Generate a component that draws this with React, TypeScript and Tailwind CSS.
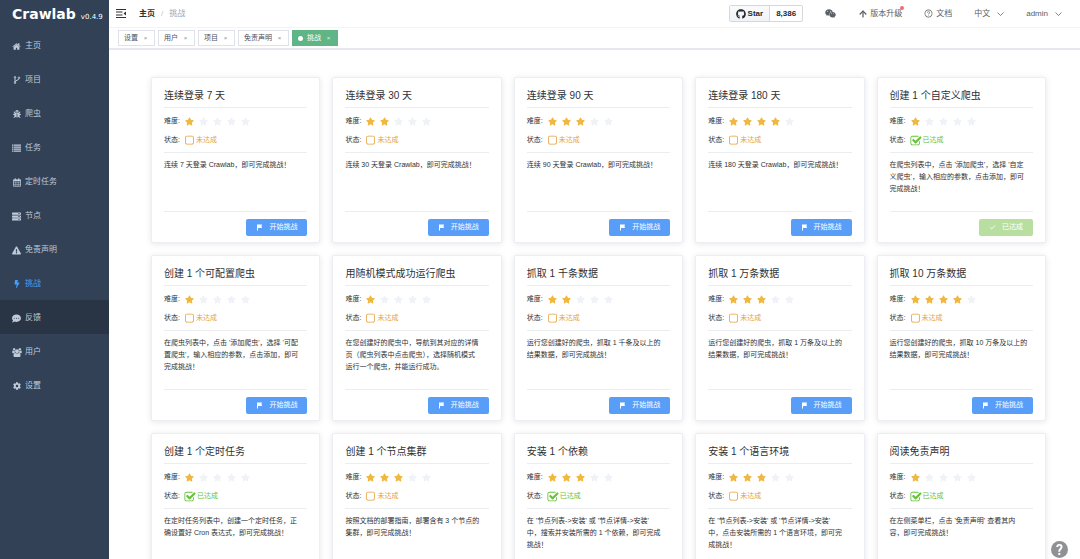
import type { ReactNode } from "react";
import { ArrowUp, Check } from "lucide-react";
import {
  FaBolt,
  FaBug,
  FaCog,
  FaCommentDots,
  FaExclamationTriangle,
  FaGithub,
  FaServer,
  FaStar,
  FaWeixin,
} from "react-icons/fa";
import { AiOutlineQuestionCircle } from "react-icons/ai";
import clsx from "clsx";

type Challenge = {
  title: string;
  difficulty: number;
  done?: boolean;
  description: string;
};

const MENU: { label: string; icon: ReactNode; active?: boolean; hover?: boolean }[] = [
  { label: "主页", icon: <HomeIcon /> },
  { label: "项目", icon: <ForkIcon /> },
  { label: "爬虫", icon: <FaBug className="size-2" /> },
  { label: "任务", icon: <ListIcon /> },
  { label: "定时任务", icon: <CalendarIcon /> },
  { label: "节点", icon: <FaServer className="size-[9px]" /> },
  { label: "免责声明", icon: <FaExclamationTriangle className="size-[9px]" /> },
  { label: "挑战", icon: <FaBolt className="size-2" />, active: true },
  { label: "反馈", icon: <FaCommentDots className="size-[9px]" />, hover: true },
  { label: "用户", icon: <GroupIcon /> },
  { label: "设置", icon: <FaCog className="size-2" /> },
];

const TABS = ["设置", "用户", "项目", "免责声明", "挑战"];

const CHALLENGES: Challenge[] = [
  { title: "连续登录 7 天", difficulty: 1, description: "连续 7 天登录 Crawlab，即可完成挑战！" },
  { title: "连续登录 30 天", difficulty: 2, description: "连续 30 天登录 Crawlab，即可完成挑战！" },
  { title: "连续登录 90 天", difficulty: 3, description: "连续 90 天登录 Crawlab，即可完成挑战！" },
  { title: "连续登录 180 天", difficulty: 4, description: "连续 180 天登录 Crawlab，即可完成挑战！" },
  {
    title: "创建 1 个自定义爬虫",
    difficulty: 1,
    done: true,
    description: "在爬虫列表中，点击 '添加爬虫'，选择 '自定\n义爬虫'，输入相应的参数，点击添加，即可\n完成挑战！",
  },
  {
    title: "创建 1 个可配置爬虫",
    difficulty: 1,
    description: "在爬虫列表中，点击 '添加爬虫'，选择 '可配\n置爬虫'，输入相应的参数，点击添加，即可\n完成挑战！",
  },
  {
    title: "用随机模式成功运行爬虫",
    difficulty: 1,
    description: "在您创建好的爬虫中，导航到其对应的详情\n页（爬虫列表中点击爬虫），选择随机模式\n运行一个爬虫，并能运行成功。",
  },
  {
    title: "抓取 1 千条数据",
    difficulty: 2,
    description: "运行您创建好的爬虫，抓取 1 千条及以上的\n结果数据，即可完成挑战！",
  },
  {
    title: "抓取 1 万条数据",
    difficulty: 3,
    description: "运行您创建好的爬虫，抓取 1 万条及以上的\n结果数据，即可完成挑战！",
  },
  {
    title: "抓取 10 万条数据",
    difficulty: 4,
    description: "运行您创建好的爬虫，抓取 10 万条及以上的\n结果数据，即可完成挑战！",
  },
  {
    title: "创建 1 个定时任务",
    difficulty: 1,
    done: true,
    description: "在定时任务列表中，创建一个定时任务，正\n确设置好 Cron 表达式，即可完成挑战！",
  },
  {
    title: "创建 1 个节点集群",
    difficulty: 3,
    description: "按照文档的部署指南，部署含有 3 个节点的\n集群，即可完成挑战！",
  },
  {
    title: "安装 1 个依赖",
    difficulty: 3,
    done: true,
    description: "在 '节点列表->安装' 或 '节点详情->安装'\n中，搜索并安装所需的 1 个依赖，即可完成\n挑战！",
  },
  {
    title: "安装 1 个语言环境",
    difficulty: 3,
    description: "在 '节点列表->安装' 或 '节点详情->安装'\n中，点击安装所需的 1 个语言环境，即可完\n成挑战！",
  },
  {
    title: "阅读免责声明",
    difficulty: 1,
    done: true,
    description: "在左侧菜单栏，点击 '免责声明' 查看其内\n容，即可完成挑战！",
  },
];

export default function App() {
  return (
    <div className="flex h-screen overflow-hidden bg-white font-['Liberation_Sans','Noto_Sans_CJK_SC',sans-serif] text-[#303133]">
      <Sidebar />
      <div className="flex min-w-0 flex-1 flex-col">
        <Navbar />
        <TagsView />
        <main className="flex-1 overflow-y-auto pt-[27px] pr-[34px] pb-6 pl-[42px] [scrollbar-width:none]">
          <div className="grid grid-cols-5 gap-3">
            {CHALLENGES.map((c) => (
              <ChallengeCard key={c.title} challenge={c} />
            ))}
          </div>
        </main>
      </div>

      {/* Floating help */}
      <button
        aria-label="帮助"
        className="fixed right-3 bottom-px flex size-[17px] items-center justify-center rounded-full bg-[#909195] font-[Roboto,sans-serif] text-[14px] leading-none font-bold text-white"
      >
        ?
      </button>
    </div>
  );
}

function Sidebar() {
  return (
    <aside className="w-[109px] shrink-0 bg-[#324155]">
      <div className="flex h-7 items-baseline gap-[5px] pl-3 font-['DejaVu_Sans',sans-serif] text-white">
        <span className="text-[14px] leading-7 font-bold">Crawlab</span>
        <span className="text-[7px]">v0.4.9</span>
      </div>
      <nav>
        {MENU.map((item) => (
          <a
            key={item.label}
            href="#"
            className={clsx(
              "flex h-[34px] items-center gap-1 pt-[2px] pl-3 text-[8px]",
              item.active ? "text-[#409eff]" : "text-[#bfcbd9]",
              item.hover && "bg-[#293445]"
            )}
          >
            <span className="flex w-[9px] justify-center">{item.icon}</span>
            {item.label}
          </a>
        ))}
      </nav>
    </aside>
  );
}

function Navbar() {
  return (
    <header className="flex h-7 shrink-0 items-center border-b border-[#f3f3f5] pr-[18px] pl-[7px] text-[8px] text-[#5a5e66]">
      <button aria-label="折叠菜单" className="mr-[13px]">
        <HamburgerIcon />
      </button>
      <div className="flex items-center gap-[6px]">
        <a href="#" className="font-bold text-[#303133]">主页</a>
        <span className="text-[#c0c4cc]">/</span>
        <span className="text-[#97a8be]">挑战</span>
      </div>

      <div className="ml-auto flex items-center gap-[22px]">
        <div className="flex h-[17px] rounded-[2px] border border-[#d5d7da] text-[8px] font-bold text-[#24292e]">
          <a href="#" className="flex items-center gap-[2px] border-r border-[#d5d7da] bg-linear-to-b from-[#fafbfc] to-[#eff3f6] px-[6px]">
            <FaGithub className="size-[10px]" />
            Star
          </a>
          <a href="#" className="flex items-center px-[6px]">8,386</a>
        </div>
        <a href="#" aria-label="微信">
          <FaWeixin className="size-[11px]" />
        </a>
        <a href="#" className="relative flex items-center gap-[2px]">
          <ArrowUp className="size-[10px]" strokeWidth={3} />
          版本升级
          <span className="absolute -top-[2px] -right-[2px] size-1 rounded-full bg-[#f56c6c]" />
        </a>
        <a href="#" className="flex items-center gap-[3px]">
          <AiOutlineQuestionCircle className="size-[9px]" />
          文档
        </a>
        <button className="flex items-center gap-[7px]">
          中文
          <ChevronIcon />
        </button>
        <button className="flex items-center gap-[7px]">
          admin
          <ChevronIcon />
        </button>
      </div>
    </header>
  );
}

function TagsView() {
  return (
    <div className="flex h-[22px] shrink-0 items-center gap-[3px] border-b-2 border-[#e6e7ec] pl-[9px] text-[7px]">
      {TABS.map((tab) => {
        const active = tab === "挑战";
        return (
          <a
            key={tab}
            href="#"
            className={clsx(
              "flex h-4 items-center border px-[5px]",
              active ? "border-[#5fb585] bg-[#5fb585] text-white" : "border-[#dfe2eb] text-[#495060]"
            )}
          >
            {active && <span className="mr-1 size-[5px] rounded-full bg-white" />}
            {tab}
            <span className={clsx("ml-1 w-[7px] text-center text-[6px]", active ? "text-white/80" : "text-[#8a8f99]")}>×</span>
          </a>
        );
      })}
    </div>
  );
}

function ChallengeCard({ challenge }: { challenge: Challenge }) {
  const { title, difficulty, done, description } = challenge;
  return (
    <section className="flex flex-col rounded-[2px] border border-[#ebeef5] bg-white px-3 pt-3 pb-[6px] shadow-[0_1px_6px_rgba(0,0,0,0.1)]">
      <h2 className="border-b border-[#ebeef0] pb-[5px] text-[10px] leading-3">{title}</h2>

      <div className="border-b border-[#ebeef0] pt-1 pb-[2px] text-[7px]">
        <div className="flex h-[19px] items-center">
          <span className="w-[21px]">难度:</span>
          <span className="flex gap-[5px]">
            {[1, 2, 3, 4, 5].map((n) => (
              <FaStar key={n} className={clsx("size-[9px]", n <= difficulty ? "text-[#f0b840]" : "text-[#eff2f7]")} />
            ))}
          </span>
        </div>
        <div className="flex h-[19px] items-center">
          <span className="w-5">状态:</span>
          <span className={clsx("flex items-center gap-px", done ? "text-[#67c23a]" : "text-[#e6a23c]")}>
            {done ? <CheckSquareIcon /> : <SquareIcon />}
            {done ? "已达成" : "未达成"}
          </span>
        </div>
      </div>

      <p className="min-h-[58px] pt-[6px] text-[7px] leading-3 whitespace-pre-line">{description}</p>

      <div className="flex justify-end border-t border-[#ebeef0] pt-[7px]">
        <button
          disabled={done}
          className={clsx(
            "flex h-[17px] items-center gap-[6px] rounded-[2px] px-[10px] text-[7px] text-white",
            done ? "bg-[#b8dfa0]" : "bg-[#589ef8]"
          )}
        >
          {done ? <Check className="size-[7px]" strokeWidth={3} /> : <FlagIcon />}
          {done ? "已达成" : "开始挑战"}
        </button>
      </div>
    </section>
  );
}

function HomeIcon() {
  return (
    <svg viewBox="0 0 1792 1792" fill="currentColor" className="size-[9px]">
      <path d="M1472 992v480q0 26-19 45t-45 19h-384v-384h-256v384h-384q-26 0-45-19t-19-45v-480q0-1 .5-3t.5-3l575-474 575 474q1 2 1 6zm223-69l-62 74q-8 9-21 11h-3q-13 0-21-7l-692-577-692 577q-12 8-24 7-13-2-21-11l-62-74q-8-10-7-23.5t11-21.5l719-599q32-26 76-26t76 26l244 204v-195q0-14 9-23t23-9h192q14 0 23 9t9 23v408l219 182q10 8 11 21.5t-7 23.500z" />
    </svg>
  );
}

function ForkIcon() {
  return (
    <svg viewBox="0 0 16 16" fill="none" stroke="currentColor" strokeWidth="2" className="size-2">
      <circle cx="4" cy="2.500" r="1.500" />
      <circle cx="4" cy="13.500" r="1.500" />
      <circle cx="12" cy="3.500" r="1.500" />
      <path d="M4 4v8M12 5c0 4-8 3-8 7" />
    </svg>
  );
}

function ListIcon() {
  return (
    <svg viewBox="0 0 18 16" fill="currentColor" className="h-2 w-[9px]">
      <path d="M0 1h3v2.500H0zM4 1h14v2.500H4zM0 5h3v2.500H0zM4 5h14v2.500H4zM0 9h3v2.500H0zM4 9h14v2.500H4zM0 13h3v2.500H0zM4 13h14v2.500H4z" />
    </svg>
  );
}

function CalendarIcon() {
  return (
    <svg viewBox="0 0 16 17" fill="none" stroke="currentColor" className="h-[9px] w-2">
      <path d="M1 3h14v13H1z" strokeWidth="1.500" />
      <path d="M1 4.500h14" strokeWidth="3" />
      <path d="M4.500 0v4M11.500 0v4" strokeWidth="2" />
      <path d="M1 9h14M1 12.500h14M5.500 6v10M10.500 6v10" />
    </svg>
  );
}

function GroupIcon() {
  return (
    <svg viewBox="0 0 1920 1792" fill="currentColor" className="h-[9px] w-[10px] shrink-0">
      <path d="M593 896q-162 5-265 128h-134q-82 0-138-40.500t-56-118.500q0-353 124-353 6 0 43.500 21t97.500 42.500 119 21.500q67 0 133-23-5 37-5 66 0 139 81 256zm1071 637q0 120-73 189.500t-194 69.500h-874q-121 0-194-69.500t-73-189.500q0-53 3.500-103.500t14-109 26.500-108.500 43-97.500 62-81 85.500-53.500 111.500-20q10 0 43 21.500t73 48 107 48 135 21.500 135-21.500 107-48 73-48 43-21.500q61 0 111.500 20t85.500 53.500 62 81 43 97.500 26.500 108.500 14 109 3.500 103.500zm-1024-1277q0 106-75 181t-181 75-181-75-75-181 75-181 181-75 181 75 75 181zm704 384q0 159-112.500 271.500t-271.500 112.500-271.500-112.500-112.500-271.500 112.500-271.500 271.500-112.500 271.500 112.500 112.500 271.500zm576 225q0 78-56 118.500t-138 40.500h-134q-103-123-265-128 81-117 81-256 0-29-5-66 66 23 133 23 59 0 119-21.500t97.500-42.500 43.500-21q124 0 124 353zm-128-609q0 106-75 181t-181 75-181-75-75-181 75-181 181-75 181 75 75 181z" />
    </svg>
  );
}

function SquareIcon() {
  return (
    <svg viewBox="0 0 1792 1792" fill="currentColor" className="size-[11px]">
      <path d="M1312 256h-832q-66 0-113 47t-47 113v832q0 66 47 113t113 47h832q66 0 113-47t47-113v-832q0-66-47-113t-113-47zm288 160v832q0 119-84.5 203.5t-203.5 84.5h-832q-119 0-203.5-84.5t-84.5-203.5v-832q0-119 84.5-203.5t203.5-84.5h832q119 0 203.5 84.5t84.5 203.5z" />
    </svg>
  );
}

function CheckSquareIcon() {
  return (
    <svg viewBox="0 0 1792 1792" fill="currentColor" className="size-[12px]">
      <path d="M1472 930v318q0 119-84.5 203.5t-203.5 84.5h-832q-119 0-203.5-84.5t-84.5-203.5v-832q0-119 84.5-203.5t203.5-84.5h832q63 0 117 25 15 7 18 23 3 17-9 29l-49 49q-10 10-23 10-3 0-9-2-23-6-45-6h-832q-66 0-113 47t-47 113v832q0 66 47 113t113 47h832q66 0 113-47t47-113v-254q0-13 9-22l64-64q10-10 23-10 6 0 12 3 20 8 20 29zm231-489l-814 814q-24 24-57 24t-57-24l-430-430q-24-24-24-57t24-57l110-110q24-24 57-24t57 24l263 263 647-647q24-24 57-24t57 24l110 110q24 24 24 57t-24 57z" />
    </svg>
  );
}

function FlagIcon() {
  return (
    <svg viewBox="0 0 14 14" fill="currentColor" className="size-[7px]">
      <path d="M2 1h10l-1 3.500 1 3.500H4v5H2z" />
    </svg>
  );
}

function ChevronIcon() {
  return (
    <svg viewBox="0 0 14 8" fill="none" stroke="currentColor" strokeWidth="1.500" className="h-1 w-[7px]">
      <path d="M1 1l6 6 6-6" />
    </svg>
  );
}

function HamburgerIcon() {
  return (
    <svg viewBox="0 0 20 18" fill="#303133" className="h-[9px] w-[10px]">
      <path d="M0 0h20v2H0zM0 5h13v2H0zM0 11h13v2H0zM0 16h20v2H0zM20 5v8l-5-4z" />
    </svg>
  );
}
